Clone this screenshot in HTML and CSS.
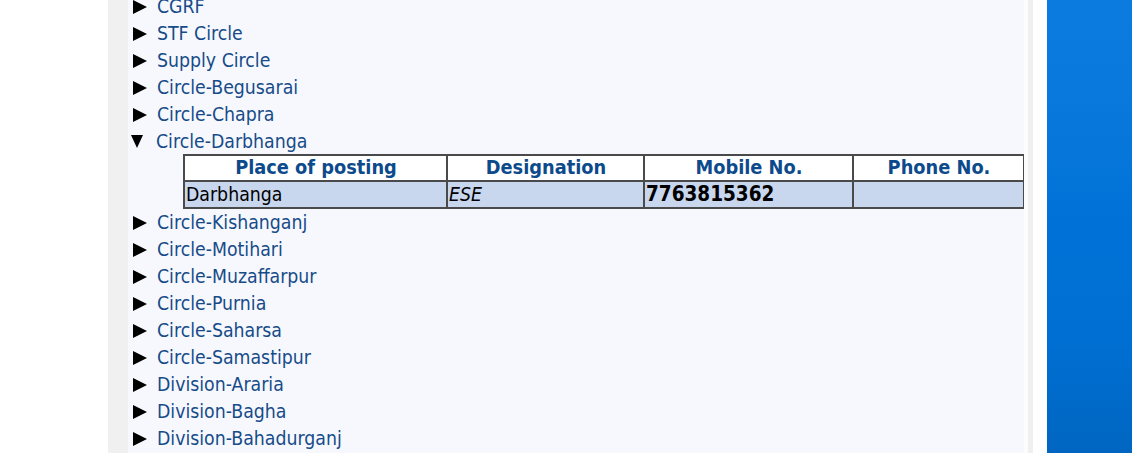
FILE: index.html
```html
<!DOCTYPE html>
<html>
<head>
<meta charset="utf-8">
<link rel="stylesheet" href="styles.css">
</head>
<body>
<div class="page">
  <div class="gutter"></div>
  <div class="frame">
    <div class="content">
      <div class="tree">
        <details class="node"><summary><span class="tri"></span>CGRF</summary></details>
        <details class="node"><summary><span class="tri"></span>STF Circle</summary></details>
        <details class="node"><summary><span class="tri"></span>Supply Circle</summary></details>
        <details class="node"><summary><span class="tri"></span>Circle-Begusarai</summary></details>
        <details class="node"><summary><span class="tri"></span>Circle-Chapra</summary></details>
        <details class="node" open><summary><span class="tri"></span>Circle-Darbhanga</summary>
          <table class="contacts">
            <colgroup>
              <col class="c1">
              <col class="c2">
              <col class="c3">
              <col class="c4">
            </colgroup>
            <tr class="head">
              <th>Place of posting</th>
              <th>Designation</th>
              <th>Mobile No.</th>
              <th>Phone No.</th>
            </tr>
            <tr class="row">
              <td>Darbhanga</td>
              <td class="desig">ESE</td>
              <td class="mobile">7763815362</td>
              <td></td>
            </tr>
          </table>
        </details>
        <details class="node"><summary><span class="tri"></span>Circle-Kishanganj</summary></details>
        <details class="node"><summary><span class="tri"></span>Circle-Motihari</summary></details>
        <details class="node"><summary><span class="tri"></span>Circle-Muzaffarpur</summary></details>
        <details class="node"><summary><span class="tri"></span>Circle-Purnia</summary></details>
        <details class="node"><summary><span class="tri"></span>Circle-Saharsa</summary></details>
        <details class="node"><summary><span class="tri"></span>Circle-Samastipur</summary></details>
        <details class="node"><summary><span class="tri"></span>Division-Araria</summary></details>
        <details class="node"><summary><span class="tri"></span>Division-Bagha</summary></details>
        <details class="node"><summary><span class="tri"></span>Division-Bahadurganj</summary></details>
      </div>
    </div>
  </div>
  <div class="spacer"></div>
  <div class="side"></div>
</div>
</body>
</html>
```

FILE: styles.css
```css
html, body {
  margin: 0;
  padding: 0;
  height: 100%;
  overflow: hidden;
  background: #ffffff;
}

body {
  font-family: "DejaVu Sans Condensed", "DejaVu Sans", sans-serif;
  font-size: 19.3px;
}

.page {
  display: flex;
  height: 453px;
}

.gutter {
  width: 108px;
  flex: none;
  background: #ffffff;
}

.frame {
  width: 925px;
  flex: none;
  display: flex;
  background: #f0f0f0;
  padding-left: 20px;
  padding-right: 5px;
  box-sizing: border-box;
}

.content {
  flex: 1;
  background: #f7f8fe;
  border-right: 4px solid #fcfcfd;
  overflow: hidden;
}

.spacer {
  width: 14px;
  flex: none;
  background: #ffffff;
}

.side {
  flex: 1;
  background: linear-gradient(180deg, #0b7be0 0%, #0a79dd 20%, #0072d7 50%, #006fd3 75%, #0066c1 100%);
}

.tree {
  margin-top: -7px;
  padding-left: 5px;
}

.node summary {
  list-style: none;
  display: flex;
  align-items: center;
  height: 27px;
  color: #164b88;
  cursor: pointer;
}

.node summary::-webkit-details-marker {
  display: none;
}

.tri {
  width: 0;
  height: 0;
  border-top: 7px solid transparent;
  border-bottom: 7px solid transparent;
  border-left: 14px solid #000000;
  margin-right: 10px;
  margin-top: 1px;
}

.node[open] > summary .tri {
  border-left: 6.5px solid transparent;
  border-right: 6.5px solid transparent;
  border-top: 13px solid #000000;
  border-bottom: 0;
  margin-left: -2px;
  margin-right: 13px;
  margin-top: 0;
}

.contacts {
  margin-left: 50px;
  margin-top: -1px;
  width: 840px;
  border-collapse: collapse;
  border: 2px solid #404040;
  table-layout: fixed;
}

.c1 { width: 263px; }
.c2 { width: 197px; }
.c3 { width: 209px; }
.c4 { width: 171px; }

.contacts th,
.contacts td {
  border: 2px solid #4a4a4a;
  padding: 0 0 0 1px;
  white-space: nowrap;
  overflow: hidden;
}

.head th {
  height: 24px;
  line-height: 24px;
  background: #ffffff;
  color: #0c4a8c;
  font-weight: bold;
  font-size: 19.8px;
  text-align: center;
}

.row td {
  height: 25px;
  line-height: 25px;
  background: #c8d7ee;
  color: #000000;
  text-align: left;
}

.desig {
  font-style: italic;
}

.mobile {
  font-weight: bold;
  font-size: 20.5px;
}
```
